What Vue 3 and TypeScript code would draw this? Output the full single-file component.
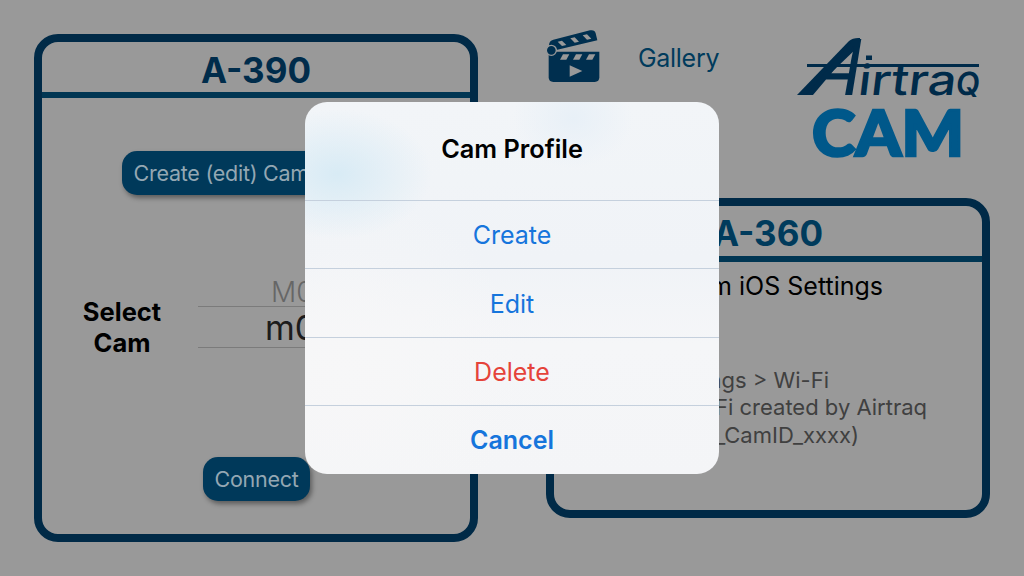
<script setup lang="ts">
import { ref } from 'vue'

interface Action {
    label: string
    kind: 'default' | 'destructive' | 'cancel'
}

interface Hint {
    id: string
    text: string
}

const isOpen = ref(true)

const actions: Action[] = [
    { label: 'Create', kind: 'default' },
    { label: 'Edit', kind: 'default' },
    { label: 'Delete', kind: 'destructive' },
    { label: 'Cancel', kind: 'cancel' },
]

const hints: Hint[] = [
    { id: 'wifi', text: 'Settings > Wi-Fi' },
    { id: 'network', text: 'Wi-Fi created by Airtraq' },
    { id: 'cam', text: '_CamID_xxxx)' },
]

function close() {
    isOpen.value = false
}
</script>

<template>
    <div class="screen">
        <section class="card card-left">
            <h2 class="card-title">A-390</h2>
            <div class="card-body">
                <button type="button" class="pill pill-create" @click="isOpen = true">Create (edit) Cam Profile</button>
                <div class="select-row">
                    <div class="select-label">Select<br>Cam</div>
                    <div class="picker">
                        <div class="picker-prev">M0</div>
                        <div class="picker-current">m0</div>
                    </div>
                </div>
                <button type="button" class="pill pill-connect">Connect</button>
            </div>
        </section>

        <div class="column">
            <header class="top">
                <svg class="clapper" width="54" height="55.33" viewBox="12 6 162 166">
                    <g fill="#002f4f">
                        <path d="M21 56 Q22 44 34 41 L144 13 Q158 10 161 22 L166 43 L46 71 L28 60 Z" />
                        <path d="M20 77 H172 V154 Q172 168 158 168 H34 Q20 168 20 154 Z" />
                    </g>
                    <circle cx="28" cy="73" r="15" fill="#002f4f" stroke="#999" stroke-width="4" />
                    <g fill="#999">
                        <path d="M47 47 L60 44 L73 57 L60 60 Z" />
                        <path d="M85 37 L98 34 L111 47 L98 50 Z" />
                        <path d="M122 28 L135 25 L148 38 L135 41 Z" />
                        <path d="M63 85 H82 L73 101 H54 Z" />
                        <path d="M102 85 H121 L112 101 H93 Z" />
                        <path d="M141 85 H160 L151 101 H132 Z" />
                        <path d="M83 118 L121 135 L83 152 Z" />
                    </g>
                </svg>
                <span class="gallery">Gallery</span>
                <svg class="brand" width="200" height="135" viewBox="790 30 200 135">
                    <!-- rule through the wordmark and the swash of its initial -->
                    <rect x="807" y="64" width="172" height="3" fill="#002b4a" />
                    <path d="M797 95 L849 41 Q853 37.5 860 38 L860 45 L808 95 Z" fill="#002b4a" />
                    <rect x="866" y="55.5" width="6" height="4.5" fill="#002b4a" />
                    <g fill="#002b4a" font-family="Inter, sans-serif">
                        <text transform="translate(804 95) skewX(-27)" font-size="77" font-weight="400"
                            textLength="50" lengthAdjust="spacingAndGlyphs">A</text>
                        <text transform="translate(857 94.5) skewX(-7)" font-size="42" font-weight="500"
                            textLength="98" lengthAdjust="spacingAndGlyphs">irtra</text>
                        <text transform="translate(955 94.5) skewX(-6)" font-size="32" font-weight="600"
                            textLength="24" lengthAdjust="spacingAndGlyphs">Q</text>
                    </g>
                    <text class="brand-cam" x="812" y="155.5" textLength="152" lengthAdjust="spacingAndGlyphs">CAM</text>
                </svg>
            </header>

            <section class="card card-right">
                <h2 class="card-title">A-360</h2>
                <p class="settings">From iOS Settings</p>
                <ul class="hints">
                    <li v-for="hint in hints" :key="hint.id" :class="`hint-${hint.id}`">{{ hint.text }}</li>
                </ul>
            </section>
        </div>

        <div v-if="isOpen" class="overlay">
            <div class="dialog" role="dialog">
                <div class="dialog-title">Cam Profile</div>
                <button v-for="action in actions" :key="action.label" type="button" class="dialog-action"
                    :class="`dialog-action-${action.kind}`" @click="close">
                    {{ action.label }}
                </button>
            </div>
        </div>
    </div>
</template>

<style>
body {
    margin: 0;
    background: #999;
}
</style>

<style scoped>
.screen {
    position: relative;
    display: flex;
    justify-content: space-between;
    align-items: flex-start;
    box-sizing: border-box;
    width: 1024px;
    height: 576px;
    padding: 28px 34px 0;
    overflow: hidden;
    background: #999;
    font-family: Inter, 'Liberation Sans', sans-serif;
}

.card {
    box-sizing: border-box;
    width: 444px;
    border: 8px solid #002a47;
    border-radius: 24px;
    overflow: hidden;
}

.card-left {
    height: 508px;
    margin-top: 6px;
}

.card-right {
    height: 320px;
}

.card-title {
    box-sizing: border-box;
    height: 56px;
    margin: 0;
    border-bottom: 6px solid #003653;
    color: #002c4b;
    font-size: 35px;
    font-weight: 700;
    line-height: 56px;
    text-align: center;
}

.card-right .card-title {
    color: #003b5c;
    line-height: 55px;
}

.card-body {
    display: flex;
    flex-direction: column;
    align-items: center;
    padding-top: 53px;
}

.pill {
    box-sizing: border-box;
    height: 44px;
    padding: 0 12px;
    border: none;
    border-radius: 15px;
    background: #00395a;
    box-shadow: 2px 3px 5px rgba(0, 0, 0, 0.4);
    color: #94a7b3;
    font-family: inherit;
    font-size: 21.5px;
    line-height: 45px;
    letter-spacing: -0.25px;
    white-space: nowrap;
}

.pill-create {
    width: 269px;
    text-align: left;
}

.pill-connect {
    width: 107px;
    margin-top: 85px;
}

.select-row {
    display: flex;
    align-self: stretch;
    align-items: flex-start;
    gap: 36px;
    height: 97px;
    margin-top: 80px;
    padding-left: 40px;
}

.select-label {
    width: 80px;
    padding-top: 21px;
    color: #000;
    font-size: 25.5px;
    font-weight: 700;
    line-height: 31px;
    text-align: center;
}

.picker {
    width: 230px;
}

.picker-prev {
    height: 31px;
    padding-left: 73px;
    color: #666;
    font-size: 28px;
    font-weight: 300;
    line-height: 34px;
}

.picker-current {
    height: 40px;
    padding-left: 67px;
    border-top: 1px solid #7b7b7b;
    border-bottom: 1px solid #7b7b7b;
    color: #1c1c1c;
    font-size: 34px;
    line-height: 42px;
}

.column {
    width: 444px;
}

.top {
    display: flex;
    height: 170px;
}

.clapper {
    flex-shrink: 0;
}

.gallery {
    width: 82px;
    margin: 14px 0 0 38px;
    color: #003b5c;
    font-size: 25px;
    line-height: 32px;
    letter-spacing: -0.3px;
}

.brand {
    flex-shrink: 0;
    margin: 2px 0 0 70px;
    overflow: visible;
}

.brand-cam {
    fill: #00588a;
    stroke: #00588a;
    stroke-width: 2.5px;
    font-family: Lato, sans-serif;
    font-size: 63px;
    font-weight: 900;
}

.settings {
    margin: 8px 99px 0 0;
    color: #000;
    font-size: 25px;
    line-height: 32px;
    text-align: right;
}

.hints {
    display: flex;
    flex-direction: column;
    align-items: flex-end;
    margin: 65px 0 0;
    padding: 0;
    color: #404040;
    font-size: 22px;
    line-height: 27.3px;
    list-style: none;
}

.hint-wifi {
    margin-right: 153px;
}

.hint-network {
    margin-right: 55px;
}

.hint-cam {
    margin-right: 123px;
}

.overlay {
    position: absolute;
    inset: 0;
    display: flex;
    align-items: center;
    justify-content: center;
}

.dialog {
    box-sizing: border-box;
    width: 414px;
    height: 372px;
    border-radius: 22px;
    overflow: hidden;
    background:
        radial-gradient(ellipse 95px 65px at 32px 72px, #d8ebf5, rgba(216, 235, 245, 0)),
        radial-gradient(ellipse 60px 50px at 268px 16px, #e8f0f7, rgba(232, 240, 247, 0)),
        radial-gradient(ellipse 180px 180px at 40px 270px, #f7f7f8, rgba(247, 247, 248, 0)),
        linear-gradient(180deg, #f2f5f8 0%, #f0f3f7 42%, #f5f6f8 65%, #f4f5f7 100%);
}

.dialog-title {
    height: 98px;
    color: #000;
    font-size: 25.3px;
    font-weight: 600;
    line-height: 93px;
    text-align: center;
}

.dialog-action {
    display: block;
    box-sizing: border-box;
    width: 100%;
    height: 68.4px;
    padding: 1px 0 0;
    border: none;
    border-top: 1px solid #c5d0dd;
    background: transparent;
    color: #1675dc;
    font-family: inherit;
    font-size: 25px;
    line-height: 66px;
    text-align: center;
}

.dialog-action-destructive {
    color: #e5433a;
}

.dialog-action-cancel {
    font-weight: 600;
}
</style>
